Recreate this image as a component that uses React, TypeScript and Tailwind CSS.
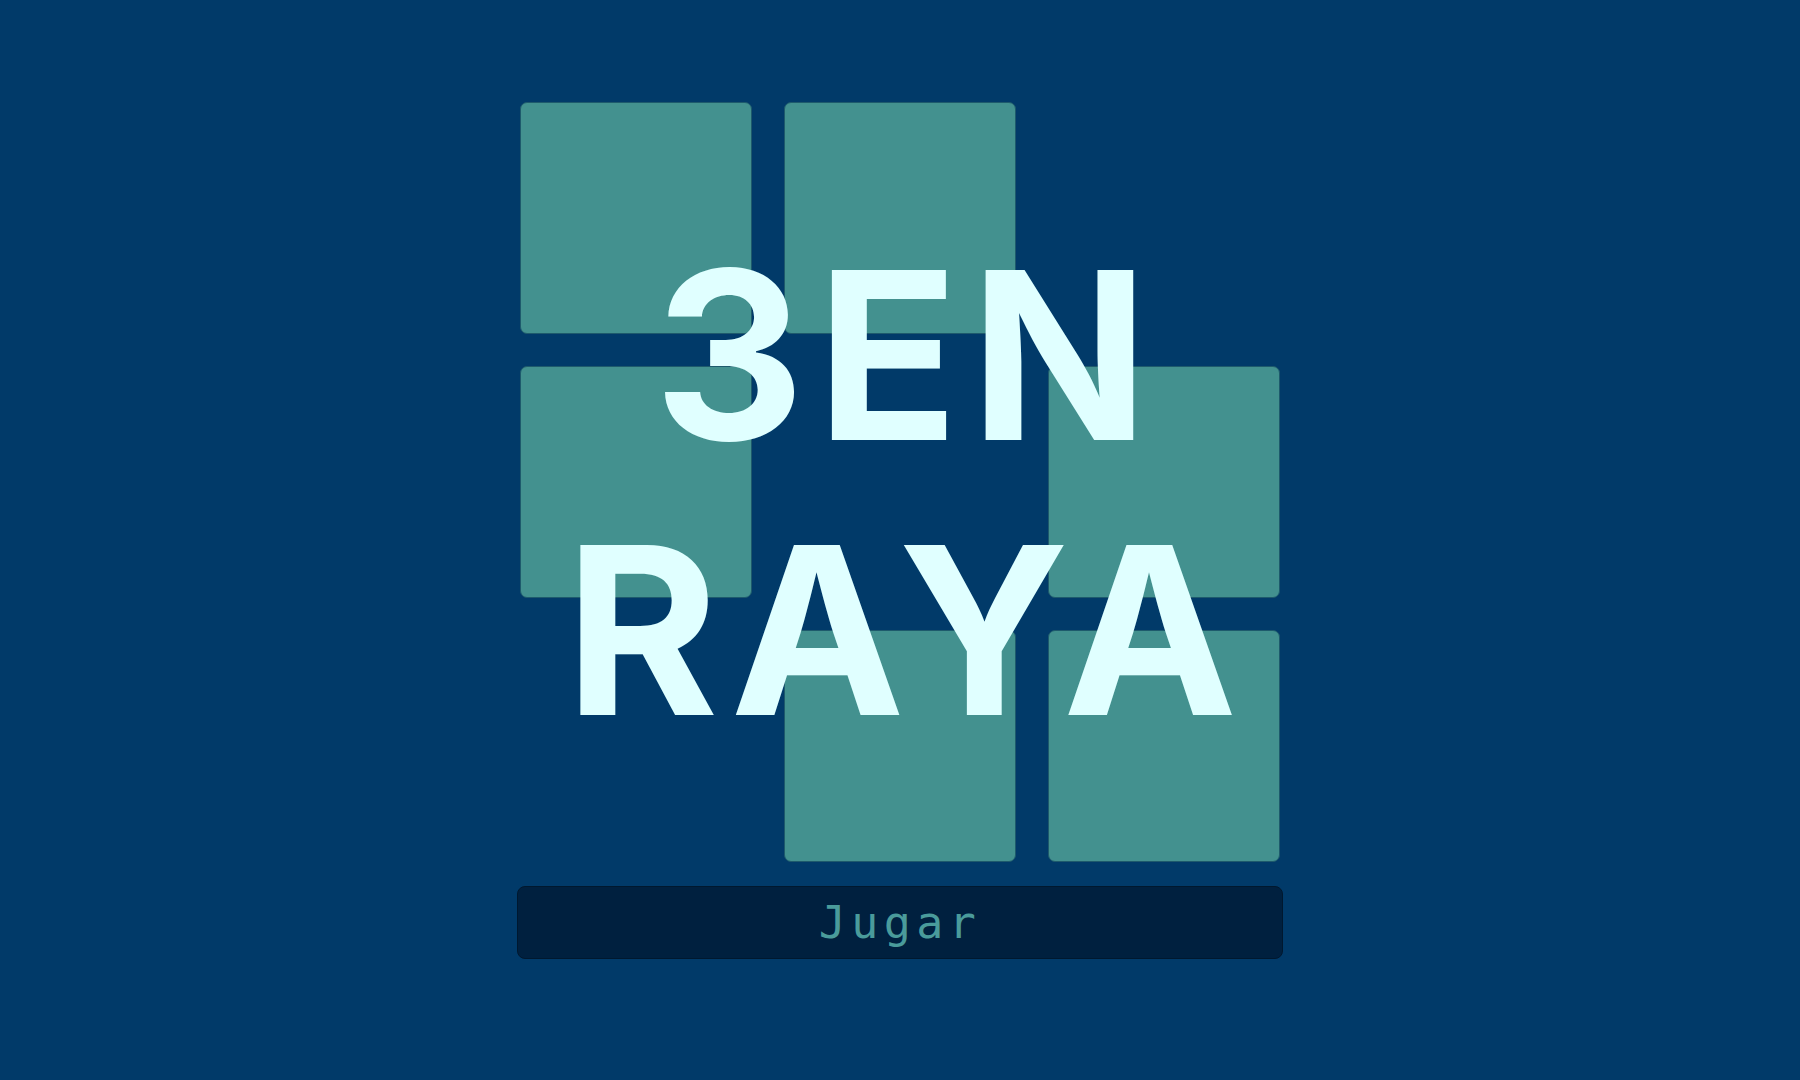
const cells = [true, true, false, true, false, true, false, true, true];

export default function App() {
  return (
    <div className="min-h-screen bg-[#013a69] flex flex-col items-center pt-[102px]">
      <div className="relative w-[760px]">
        <div className="grid grid-cols-3 gap-[32px]">
          {cells.map((on, i) => (
            <div
              key={i}
              className={
                on
                  ? 'h-[232px] rounded-[7px] bg-[#43918f] border border-[#1e5a6c]'
                  : 'h-[232px]'
              }
            />
          ))}
        </div>
        <div className="absolute inset-0 flex items-center justify-center pt-[20px] pl-[14px]">
          <h1
            className="text-center text-[#e0ffff] font-bold text-[234px] leading-[275px] tracking-[0.05em]"
            style={{ fontFamily: 'Inter, "Noto Sans", sans-serif' }}
          >
            3EN
            <br />
            RAYA
          </h1>
        </div>
      </div>
      <button className="mt-[24px] w-[766px] h-[73px] rounded-[8px] bg-[#00203f] border border-[#00182f] text-[#4a9b9b] text-[45px] tracking-[0.12em] flex items-center justify-center">
        <span style={{ fontFamily: '"DejaVu Sans Mono", "Liberation Mono", monospace' }}>Jugar</span>
      </button>
    </div>
  );
}
